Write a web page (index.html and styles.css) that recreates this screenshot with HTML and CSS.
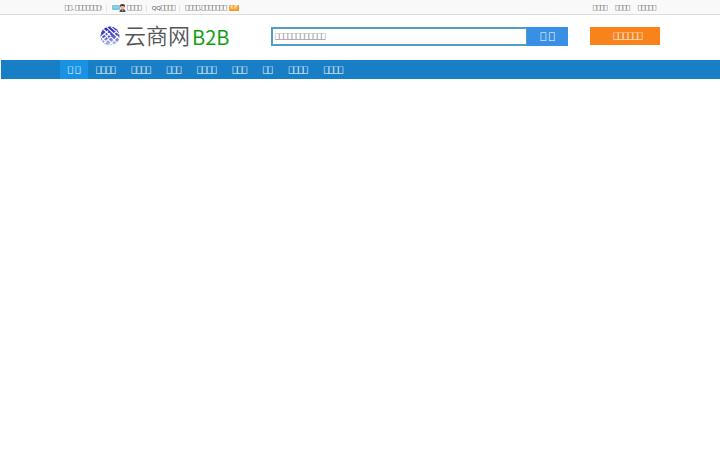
FILE: index.html
```html
<!DOCTYPE html>
<html lang="zh">
<head>
<meta charset="utf-8">
<title>云商网 B2B</title>
<link rel="stylesheet" href="styles.css">
</head>
<body>
<div class="topbar">
  <div class="wrap topbar-inner">
    <div class="top-left">
      <span class="cell">⎕⎕, ⎕⎕⎕⎕⎕⎕⎕!</span>
      <a class="cell" href="#">
        <svg class="user-icon" viewBox="0 0 14 8" aria-hidden="true">
          <rect x="0" y="1" width="8" height="5" rx="1" fill="#7cc4e6"/>
          <path d="M1 3h6" stroke="#a5d8ee" stroke-width="1"/>
          <path d="M7.500 8c0-2 1-3 3-3s3 1 3 3z" fill="#454b58"/>
          <circle cx="10.500" cy="3.500" r="2" fill="#e8b48a"/>
          <path d="M8 3.500C7.500 1 8.500 0 10.500 0s3 1 2.500 3.500l-1-1.500h-3z" fill="#4c3a32"/>
          <path d="M9.500 5.500h2l-1 2z" fill="#e89a74"/>
        </svg>⎕⎕⎕⎕</a>
      <a class="cell" href="#">QQ⎕⎕⎕⎕</a>
      <a class="cell" href="#">⎕⎕⎕⎕,⎕⎕⎕⎕⎕⎕⎕<span class="badge">免费</span></a>
    </div>
    <nav class="top-right">
      <a href="#">⎕⎕⎕⎕</a>
      <a href="#">⎕⎕⎕⎕</a>
      <a href="#">⎕⎕⎕⎕⎕</a>
    </nav>
  </div>
</div>
<header class="wrap header">
  <a class="logo" href="#">
    <svg class="logo-mark" viewBox="0 0 22 22" aria-hidden="true">
      <defs>
        <linearGradient id="globe" x1="0" y1="0" x2="0" y2="1">
          <stop offset="0" stop-color="#2820bd"/>
          <stop offset=".5" stop-color="#5558c8"/>
          <stop offset="1" stop-color="#c3cde8"/>
        </linearGradient>
        <clipPath id="disc"><circle cx="11" cy="11" r="10.500"/></clipPath>
      </defs>
      <circle cx="11" cy="11" r="10.500" fill="url(#globe)"/>
      <g clip-path="url(#disc)" fill="none" stroke="#fff" stroke-width="1.200">
        <path d="M3 3l9 8M7 1l14 13M12 1l9 8M0 13L9 5M1 17l10-9M3 20l9-8M1 12l6 6M5 9l4 4M9 15l7 7M12 12l8 8M10 21l10-10M15 9l4-4"/>
      </g>
    </svg>
    <span class="logo-name">云商网</span>
    <span class="logo-b2b">B2B</span>
  </a>
  <form class="search">
    <input type="text" aria-label="Search" placeholder="⎕⎕⎕⎕⎕⎕⎕⎕⎕⎕⎕⎕">
    <button type="button">⎕&emsp13;⎕</button>
  </form>
  <a class="publish" href="#">⎕⎕⎕⎕⎕⎕</a>
</header>
<nav class="mainnav">
  <div class="wrap nav-inner">
    <a class="active" href="#">⎕&emsp13;⎕</a>
    <a href="#">⎕⎕⎕⎕</a>
    <a href="#">⎕⎕⎕⎕</a>
    <a href="#">⎕⎕⎕</a>
    <a href="#">⎕⎕⎕⎕</a>
    <a href="#">⎕⎕⎕</a>
    <a href="#">⎕⎕</a>
    <a href="#">⎕⎕⎕⎕</a>
    <a href="#">⎕⎕⎕⎕</a>
  </div>
</nav>
</body>
</html>
```
FILE: styles.css
```css
* { box-sizing: border-box; }
body {
  margin: 0;
  background: #fff;
  color: #444;
  font-family: "Open Sans", "DejaVu Sans Mono", "Noto Sans CJK SC", sans-serif;
  font-size: 6px;
}
a { color: inherit; text-decoration: none; }
input, button { font-family: inherit; }
.wrap { width: calc(100% - 120px); max-width: 1200px; margin: 0 auto; }

.topbar { background: #f9f9f9; border-bottom: 1px solid #ddd; }
.topbar-inner {
  display: flex;
  justify-content: space-between;
  padding: 2px 4px 0 5px;
  line-height: 12px;
}
.top-left, .top-right { display: flex; white-space: nowrap; }
.top-right { gap: 8px; }
.cell { display: flex; align-items: center; }
.cell + .cell::before {
  content: "";
  width: 1px;
  height: 7px;
  margin: 0 5px 0 4px;
  background: #e4e4e4;
}
.user-icon { width: 14px; height: 8px; margin-right: 1px; }
.badge {
  margin-left: 2px;
  padding: 0 1px;
  background: #f39a1f;
  color: #fff;
  font-size: 4px;
  line-height: 6px;
  border-radius: 1px;
}

.header {
  display: flex;
  align-items: center;
  height: 45px;
  padding-bottom: 3px;
}
.logo { display: flex; align-items: center; width: 171px; margin-left: 40px; }
.logo-mark { width: 20px; height: 20px; margin-right: 4px; }
.logo-name {
  margin-bottom: 4px;
  color: #555;
  font-family: "Noto Sans CJK SC DemiLight", "Noto Sans CJK SC", sans-serif;
  font-size: 22px;
  font-weight: 350;
  line-height: 32px;
  white-space: nowrap;
}
.logo-b2b {
  margin: 2px 0 0 2px;
  color: #12a012;
  font-family: "Noto Sans CJK SC", sans-serif;
  font-size: 20px;
  line-height: 32px;
}
.search { display: flex; flex: 1; height: 19px; }
.search input {
  flex: 1;
  min-width: 0;
  padding: 0 2px;
  border: 2px solid #529fc5;
  border-right-width: 1px;
  border-radius: 0;
  background: #fff;
  color: #444;
  font-size: 7px;
}
.search input::placeholder { color: #777; opacity: 1; }
.search button {
  width: 41px;
  padding: 0;
  border: 0;
  background: #3790e3;
  color: #fff;
  font-size: 9px;
}
.publish {
  width: 70px;
  margin-left: 22px;
  padding-left: 6px;
  background: #f8831a;
  color: #fff;
  font-size: 8px;
  line-height: 18px;
  text-align: center;
}

.mainnav { background: #187fc6; box-shadow: inset 1px 0 #fff; color: #fff; }
.nav-inner { display: flex; font-size: 8px; line-height: 19px; }
.nav-inner a { padding: 0 8px; }
.nav-inner .active { background: #1a92e4; }
```
